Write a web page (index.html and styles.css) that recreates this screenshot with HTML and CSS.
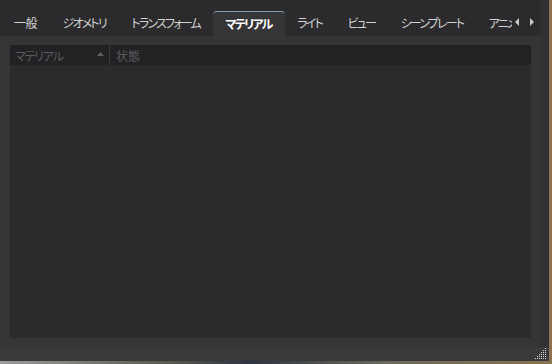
FILE: index.html
```html
<!DOCTYPE html>
<html>
<head>
  <meta charset="UTF-8">
  <meta name="viewport" content="width=device-width, initial-scale=1.0">
  <link rel="stylesheet" href="styles.css">
</head>
<body>
  <div class="window">
    <div class="tabbar">
      <div class="tabs">
        <div class="tab">一般</div>
        <div class="tab">ジオメトリ</div>
        <div class="tab">トランスフォーム</div>
        <div class="tab active">マテリアル</div>
        <div class="tab">ライト</div>
        <div class="tab">ビュー</div>
        <div class="tab">シーンプレート</div>
        <div class="tab">アニメーション</div>
      </div>
      <div class="tab-arrows">
        <svg width="28" height="12" viewBox="0 0 28 12">
          <polygon points="3,6 7,2 7,10" fill="#c8c8c8"/>
          <polygon points="18,2 22,6 18,10" fill="#c8c8c8"/>
        </svg>
      </div>
    </div>
    <div class="panel">
      <div class="table">
        <div class="table-header">
          <div class="col col-material">
            <span>マテリアル</span>
            <svg class="sort" width="7" height="4" viewBox="0 0 7 4"><polygon points="0,4 3.5,0 7,4" fill="#5e5e60"/></svg>
          </div>
          <div class="col col-state">状態</div>
        </div>
        <div class="table-body"></div>
      </div>
    </div>
    <div class="statusbar">
      <svg class="grip" width="14" height="14" viewBox="0 0 14 14">
        <g fill="#d8d8d8">
          <rect x="11" y="1" width="1" height="1"/>
          <rect x="9" y="3" width="1" height="1"/><rect x="11" y="3" width="1" height="1"/>
          <rect x="7" y="5" width="1" height="1"/><rect x="9" y="5" width="1" height="1"/><rect x="11" y="5" width="1" height="1"/>
          <rect x="5" y="7" width="1" height="1"/><rect x="7" y="7" width="1" height="1"/><rect x="9" y="7" width="1" height="1"/><rect x="11" y="7" width="1" height="1"/>
          <rect x="3" y="9" width="1" height="1"/><rect x="5" y="9" width="1" height="1"/><rect x="7" y="9" width="1" height="1"/><rect x="9" y="9" width="1" height="1"/><rect x="11" y="9" width="1" height="1"/>
          <rect x="1" y="11" width="1" height="1"/><rect x="3" y="11" width="1" height="1"/><rect x="5" y="11" width="1" height="1"/><rect x="7" y="11" width="1" height="1"/><rect x="9" y="11" width="1" height="1"/><rect x="11" y="11" width="1" height="1"/>
        </g>
      </svg>
    </div>
  </div>
  <div class="desktop"></div>
</body>
</html>
```

FILE: styles.css
```css
body {
  margin: 0;
  width: 552px;
  height: 364px;
  overflow: hidden;
  font-family: "Noto Sans CJK JP", "Noto Sans", sans-serif;
  font-size: 12px;
  background: linear-gradient(90deg, #3c3a2e 0%, #4a4636 60%, #8a7250 100%);
  display: flex;
  flex-direction: column;
}
.window {
  width: 549px;
  height: 361px;
  background-color: #313133;
  display: flex;
  flex-direction: column;
}
.tabbar {
  height: 36px;
  width: 540px;
  background-color: #2b2b2d;
  display: flex;
  align-items: flex-end;
}
.tabs {
  flex: 1;
  min-width: 0;
  display: flex;
  align-items: flex-end;
  overflow: hidden;
  padding-left: 2px;
}
.tab {
  flex: none;
  height: 25px;
  line-height: 24px;
  padding: 0 13.5px 0 12px;
  color: #d2d2d2;
  font-feature-settings: "palt";
  letter-spacing: -1.8px;
  white-space: nowrap;
  box-sizing: border-box;
}
.tab:first-child {
  letter-spacing: -0.5px;
}
.tab.active {
  background-color: #353537;
  border-top: 1px solid #7e9cb2;
  border-radius: 4px 4px 0 0;
  color: #ffffff;
  font-weight: bold;
  line-height: 23px;
}
.tab-arrows {
  flex: none;
  width: 28px;
  height: 36px;
  display: flex;
  align-items: center;
  padding-top: 8px;
  box-sizing: border-box;
}
.panel {
  width: 540px;
  height: 316px;
  background-color: #353537;
  padding: 9px 9px 9px 10px;
  box-sizing: border-box;
}
.table {
  height: 100%;
  background-color: #2b2b2d;
  display: flex;
  flex-direction: column;
}
.table-header {
  height: 20px;
  background-color: #222224;
  display: flex;
  color: #5a5a5c;
  font-feature-settings: "palt";
}
.col {
  display: flex;
  align-items: center;
  padding-left: 5px;
  box-sizing: border-box;
}
.col-material {
  width: 100px;
  border-right: 1px solid #38383a;
  justify-content: space-between;
  padding-right: 5px;
  letter-spacing: -1.2px;
}
.col-state {
  padding-left: 6px;
}
.sort {
  margin-top: -2px;
}
.table-body {
  flex: 1;
}
.statusbar {
  flex: 1;
  width: 549px;
  background-color: #39393b;
  display: flex;
  justify-content: flex-end;
  align-items: flex-end;
}
.grip {
  margin: 0 1px 0 0;
}
.desktop {
  flex: 1;
  background: linear-gradient(90deg, #9c9c9c 0%, #5a5a50 30%, #2e3440 45%, #6a6a5a 70%, #8a7250 100%);
}
```
